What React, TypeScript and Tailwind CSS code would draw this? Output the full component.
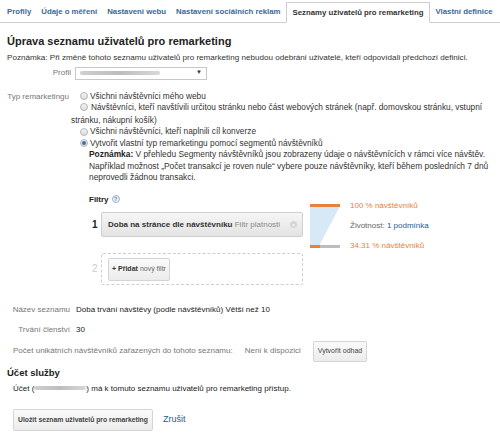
import React from "react";

const tabs = [
  "Profily",
  "Údaje o měření",
  "Nastavení webu",
  "Nastavení sociálních reklam",
  "Seznamy uživatelů pro remarketing",
  "Vlastní definice",
];

const Radio = ({ checked }: { checked?: boolean }) => (
  <span className="inline-flex h-[8px] w-[8px] shrink-0 items-center justify-center rounded-full border border-[#b5b5b5] bg-gradient-to-b from-[#f4f4f4] to-[#dcdcdc]">
    {checked && <span className="h-[4px] w-[4px] rounded-full bg-[#3b6fb6]" />}
  </span>
);

const Blur = ({ w }: { w: number }) => (
  <span
    className="inline-block h-[4px] rounded-full bg-gradient-to-r from-[#cfcfcf] via-[#bdbdbd] to-[#d8d8d8] align-middle"
    style={{ width: w }}
  />
);

export default function App() {
  return (
    <div
      className="h-[435px] w-[500px] overflow-hidden bg-white text-[8px] leading-[11.5px] text-[#333]"
      style={{ fontFamily: '"Liberation Sans", Arial, sans-serif' }}
    >
      {/* tabs */}
      <div className="flex h-[23px] items-end whitespace-nowrap border-b border-[#cfcfcf] pl-[2px]">
        {tabs.map((t, i) =>
          i === 4 ? (
            <div
              key={t}
              className="-mb-px flex h-[21px] items-center border border-b-white border-[#cfcfcf] bg-white px-[6px] text-[7.8px] font-bold text-[#333]"
            >
              {t}
            </div>
          ) : (
            <div
              key={t}
              className="flex h-[21px] items-center px-[5px] text-[7.8px] font-bold text-[#3b6a94]"
            >
              {t}
            </div>
          )
        )}
      </div>

      <div className="px-[7px]">
        <h1 className="mt-[11px] text-[11px] font-bold leading-[14px] text-[#222]">
          Úprava seznamu uživatelů pro remarketing
        </h1>
        <p className="mt-[4px] whitespace-nowrap text-[8.1px]">
          Poznámka: Při změně tohoto seznamu uživatelů pro remarketing nebudou odebráni uživatelé, kteří odpovídali předchozí definici.
        </p>

        {/* profil */}
        <div className="mt-[3px] flex items-center">
          <div className="w-[64px] text-right text-[#777]">Profil</div>
          <div className="ml-[4px] flex h-[13px] w-[132px] items-center justify-between border border-[#c8c8c8] bg-white pl-[4px] pr-[4px]">
            <Blur w={80} />
            <span className="text-[6px] text-[#333]">▼</span>
          </div>
        </div>

        {/* typ remarketingu */}
        <div className="mt-[11px] text-[8.3px]">
          <div className="flex items-center">
            <div className="w-[62px] shrink-0 text-right text-[8px] text-[#777]">Typ remarketingu</div>
            <div className="ml-[11px] flex items-center gap-[2px]">
              <Radio />
              <span>Všichni návštěvníci mého webu</span>
            </div>
          </div>
          <div className="pl-[64px] indent-[9px]">
            <span className="mr-[3px] inline-block align-[-1px] indent-0">
              <Radio />
            </span>
            Návštěvníci, kteří navštívili určitou stránku nebo část webových stránek (např. domovskou stránku, vstupní stránku, nákupní košík)
          </div>
          <div className="flex items-center gap-[2px] pl-[73px]">
            <Radio />
            <span>Všichni návštěvníci, kteří naplnili cíl konverze</span>
          </div>
          <div className="flex items-center gap-[2px] pl-[73px]">
            <Radio checked />
            <span>Vytvořit vlastní typ remarketingu pomocí segmentů návštěvníků</span>
          </div>
          <p className="pl-[82px] text-[8.4px]">
            <b className="text-[#222]">Poznámka:</b> V přehledu Segmenty návštěvníků jsou zobrazeny údaje o návštěvnících v rámci více návštěv. Například možnost „Počet transakcí je roven nule“ vybere pouze návštěvníky, kteří během posledních 7 dnů neprovedli žádnou transakci.
          </p>
        </div>

        {/* filtry */}
        <div className="mt-[10px] flex pl-[70px]">
          <div className="w-[233px] shrink-0">
            <div className="flex items-center gap-[3px] pl-[12px] font-bold text-[#222]">
              Filtry
              <span className="flex h-[8px] w-[8px] items-center justify-center rounded-full border border-[#9bb3c9] bg-[#eef3f8] text-[6px] leading-none text-[#6b8fb2]">
                ?
              </span>
            </div>

            <div className="mt-[7px] flex items-center">
              <div className="w-[24px] pl-[15px] text-[10px] font-bold text-[#222]">1</div>
              <div className="flex h-[25px] w-[202px] items-center justify-between rounded-[2px] border border-[#cfcfcf] bg-gradient-to-b from-[#f6f6f6] to-[#e3e3e3] pl-[6px] pr-[5px]">
                <span className="whitespace-nowrap">
                  <b className="text-[#333]">Doba na stránce dle návštěvníku</b>{" "}
                  <span className="text-[#888]">Filtr platnosti</span>
                </span>
                <span className="flex h-[7px] w-[7px] items-center justify-center rounded-full bg-[#d5d5d5] text-[6px] leading-none text-white">
                  ×
                </span>
              </div>
            </div>

            <div className="mt-[16px] flex items-center">
              <div className="w-[24px] pl-[15px] text-[10px] text-[#ccc]">2</div>
              <div className="flex h-[32px] w-[202px] items-center rounded-[2px] border border-dashed border-[#cfcfcf] pl-[6px]">
                <div className="flex h-[23px] items-center whitespace-nowrap rounded-[2px] border border-[#d5d5d5] bg-gradient-to-b from-[#fafafa] to-[#ececec] px-[3px] text-[7px]">
                  <b className="text-[#333]">+ Přidat</b>
                  <span className="ml-[2px] text-[#666]">nový filtr</span>
                </div>
              </div>
            </div>
          </div>

          {/* funnel */}
          <div className="mt-[6px] flex">
            <svg width="32" height="52" viewBox="0 0 32 52">
              <polygon points="0,6 30,6 9,46 0,46" fill="#d7e8f6" />
              <rect x="0" y="4" width="30" height="3" fill="#e8823a" />
              <rect x="0" y="45" width="30" height="3" fill="#bdbdbd" />
              <rect x="0" y="45" width="10" height="3" fill="#e8823a" />
            </svg>
            <div className="ml-[8px] flex h-[52px] flex-col justify-between whitespace-nowrap text-[8px]">
              <div className="text-[#e8823a]">100 % návštěvníků</div>
              <div className="text-[#666]">
                Životnost: <span className="text-[#1d5c8e]">1 podmínka</span>
              </div>
              <div className="text-[#e8823a]">34.31 % návštěvníků</div>
            </div>
          </div>
        </div>

        {/* summary */}
        <div className="mt-[19px] flex">
          <div className="w-[63px] text-right text-[#777]">Název seznamu</div>
          <div className="ml-[6px] text-[#222]">Doba trvání návštěvy (podle návštěvníků) Větší než 10</div>
        </div>
        <div className="mt-[8.5px] flex">
          <div className="w-[63px] text-right text-[#777]">Trvání členství</div>
          <div className="ml-[6px] text-[#222]">30</div>
        </div>
        <div className="mt-[5px] flex h-[21px] items-center pl-[6px]">
          <span className="text-[#777]">Počet unikátních návštěvníků zařazených do tohoto seznamu:</span>
          <span className="ml-[12px] text-[#777]">Není k dispozici</span>
          <div className="ml-[12px] flex h-[21px] items-center rounded-[2px] border border-[#d5d5d5] bg-gradient-to-b from-[#fafafa] to-[#ececec] px-[4px] text-[7px] text-[#444]">
            Vytvořit odhad
          </div>
        </div>

        <div className="mt-[5px] text-[9.5px] font-bold leading-[12px] text-[#222]">Účet služby</div>
        <div className="mt-[4px] pl-[6px] text-[#222]">
          Účet (<Blur w={52} />) má k tomuto seznamu uživatelů pro remarketing přístup.
        </div>

        <div className="mt-[15px] flex items-center pl-[6px]">
          <div className="flex h-[22px] items-center rounded-[2px] border border-[#d5d5d5] bg-gradient-to-b from-[#fafafa] to-[#ececec] px-[4px] text-[6.8px] font-bold text-[#444]">
            Uložit seznam uživatelů pro remarketing
          </div>
          <span className="ml-[10px] text-[9px] text-[#1d5c8e]">Zrušit</span>
        </div>
      </div>
    </div>
  );
}
